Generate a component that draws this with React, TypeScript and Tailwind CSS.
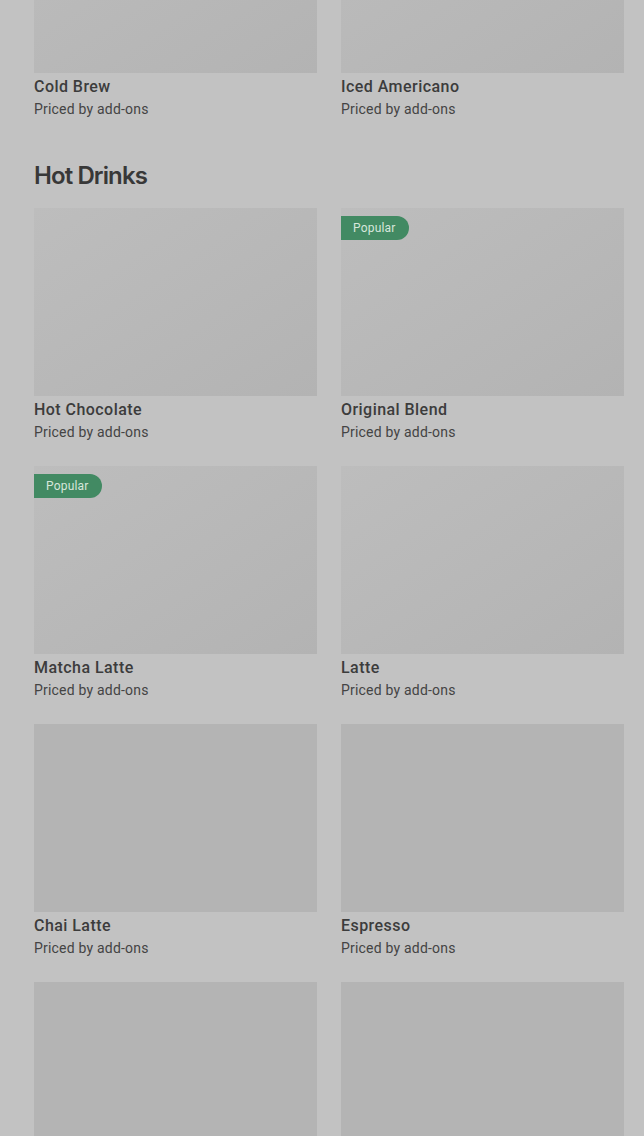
import React from "react";

type Item = { name: string; popular?: boolean; flat?: boolean };

const topRow: Item[] = [{ name: "Cold Brew" }, { name: "Iced Americano" }];

const hotDrinks: Item[] = [
  { name: "Hot Chocolate" },
  { name: "Original Blend", popular: true },
  { name: "Matcha Latte", popular: true },
  { name: "Latte" },
  { name: "Chai Latte", flat: true },
  { name: "Espresso", flat: true },
];

// last row only peeks in at the bottom of the screen
const peekRow: Item[] = [
  { name: "Mocha", flat: true },
  { name: "Cappuccino", flat: true },
];

const DrinkImage: React.FC<{ item: Item }> = ({ item }) => (
  <div
    className={`relative h-[188px] w-full ${
      item.flat
        ? "bg-[#b4b4b4]"
        : "bg-gradient-to-br from-[#bdbdbd] via-[#b8b8b8] to-[#b3b3b3]"
    }`}
  >
    {item.popular && (
      <span className="absolute left-0 top-2 rounded-r-full bg-[#428a63] pl-3 pr-[13px] py-[3px] text-[12px] leading-[18px] tracking-[0.2px] text-[#d6e6db]">
        Popular
      </span>
    )}
  </div>
);

const DrinkCard: React.FC<{ item: Item }> = ({ item }) => (
  <div className="flex flex-col">
    <DrinkImage item={item} />
    <p className="pt-[2px] text-[16px] leading-6 font-medium tracking-[0.45px] text-[#3c3c3c]">
      {item.name}
    </p>
    <p className="text-[14px] leading-5 tracking-[0.2px] text-[#444444]">
      Priced by add-ons
    </p>
  </div>
);

export default function App() {
  return (
    <div className="h-[1136px] w-full overflow-hidden bg-[#c2c2c2] font-['Roboto',sans-serif]">
      <div className="-mt-[115px] pl-[34px] pr-[20px]">
        <div className="grid grid-cols-2 gap-x-6 gap-y-6">
          {topRow.map((item) => (
            <DrinkCard key={item.name} item={item} />
          ))}
        </div>

        {/* Hot Drinks */}
        <section>
          <h2 className="mt-[41px] mb-4 text-[24px] leading-8 font-semibold tracking-[-0.9px] text-[#383838] font-['Inter',sans-serif]">
            Hot Drinks
          </h2>
          <div className="grid grid-cols-2 gap-x-6 gap-y-6">
            {hotDrinks.map((item) => (
              <DrinkCard key={item.name} item={item} />
            ))}
            {peekRow.map((item) => (
              <DrinkImage key={item.name} item={item} />
            ))}
          </div>
        </section>
      </div>
    </div>
  );
}
